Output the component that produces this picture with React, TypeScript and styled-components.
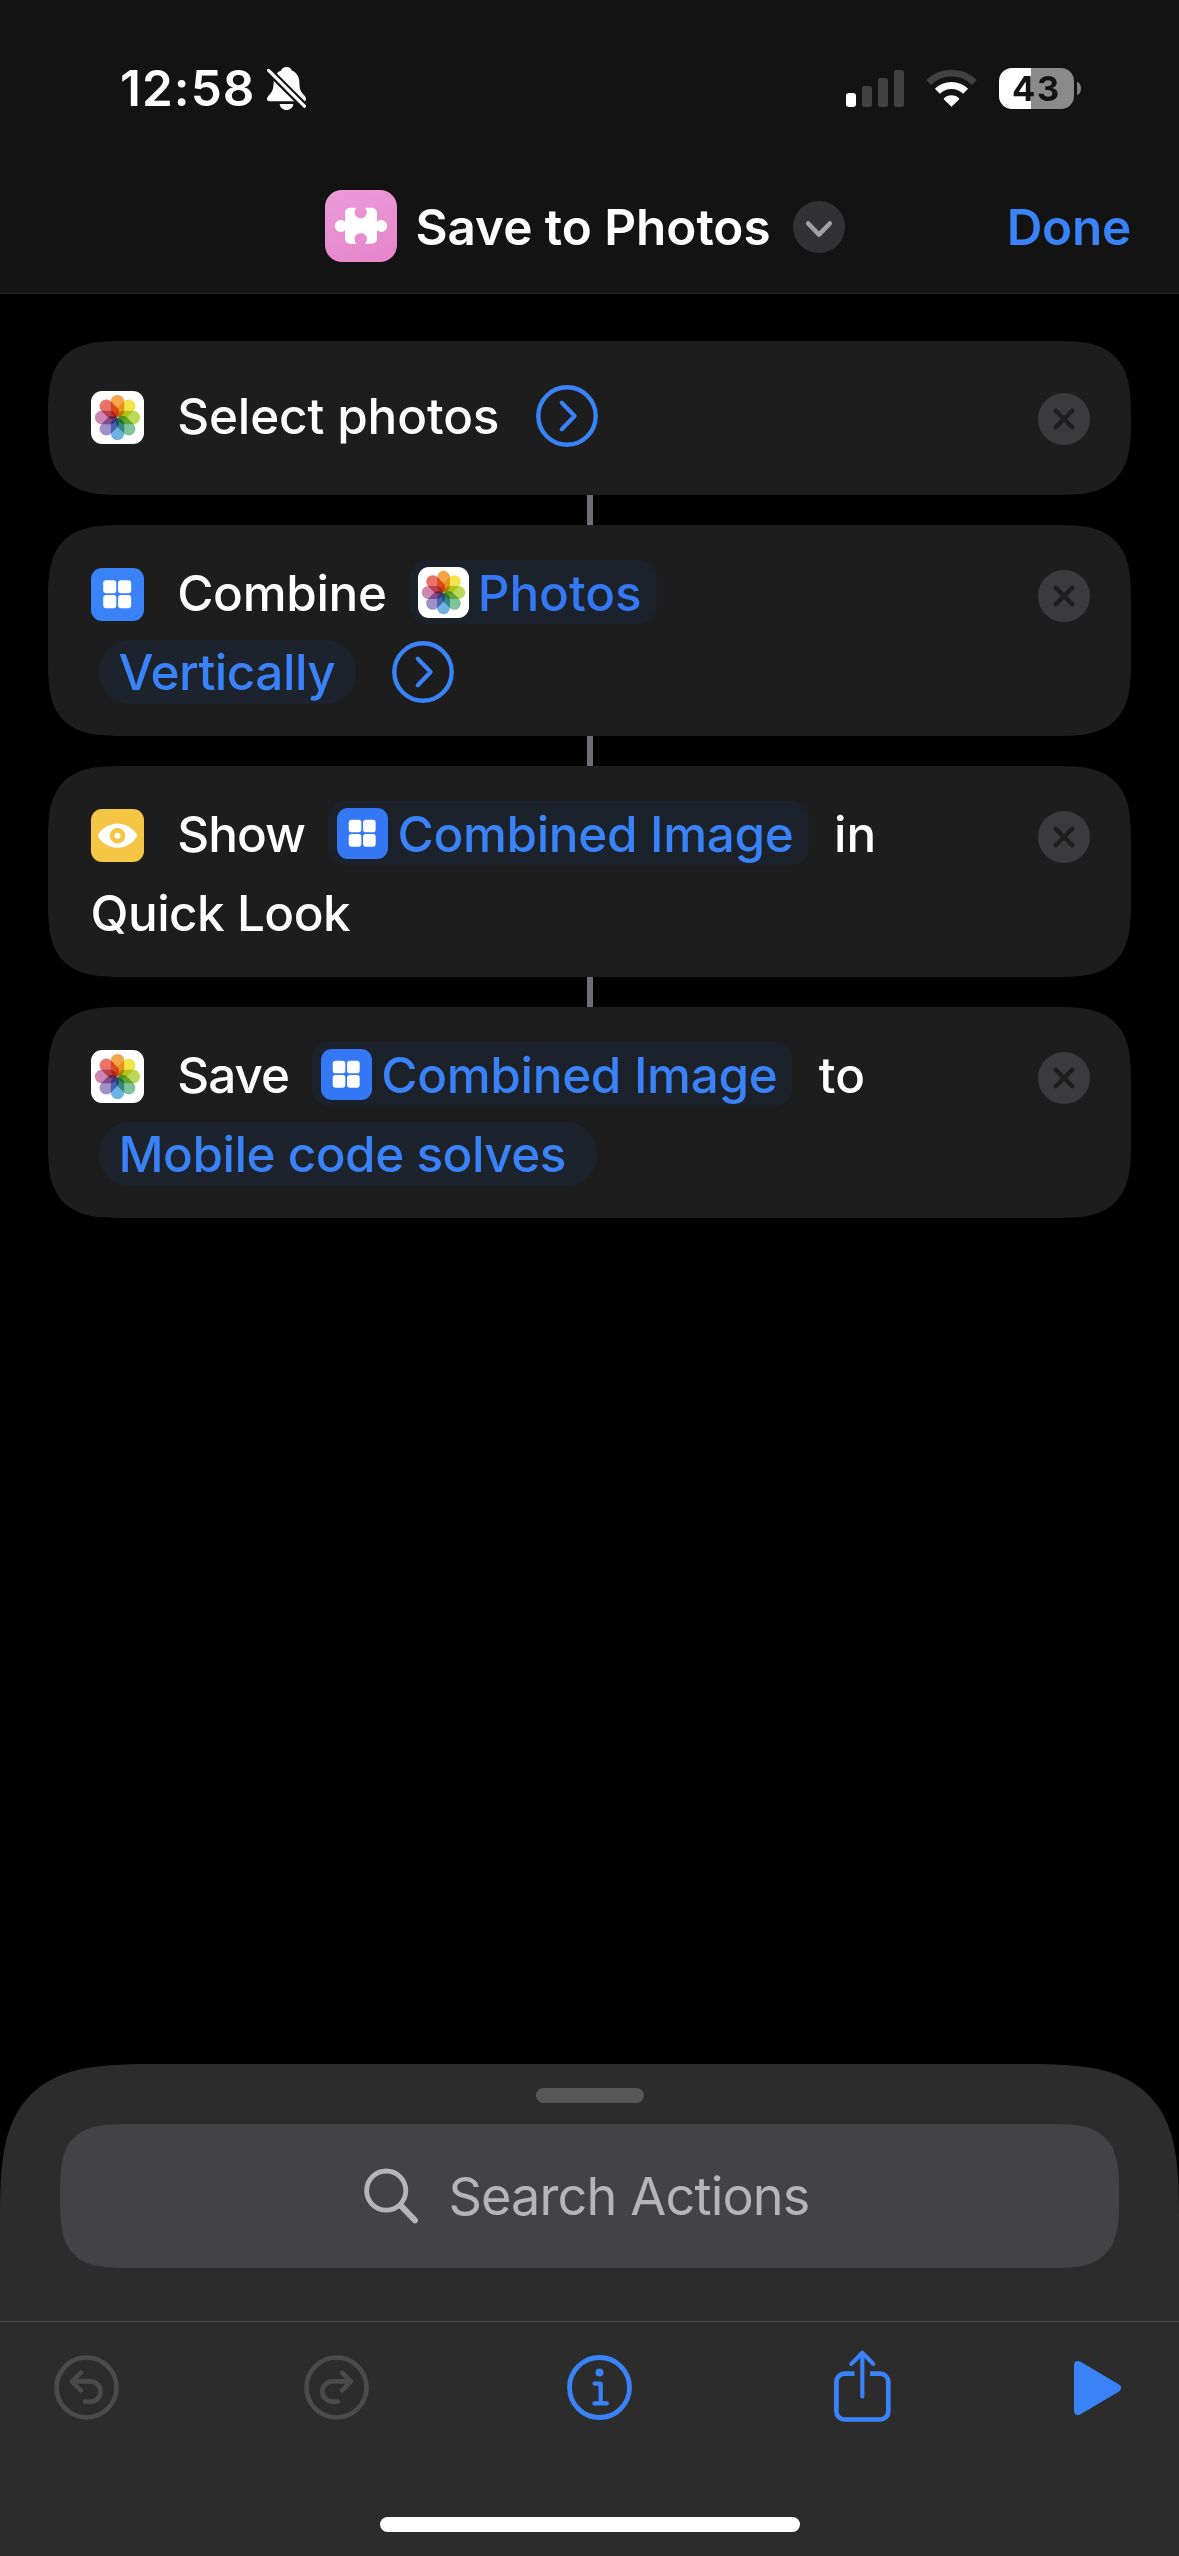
import React from "react";
import styled, { createGlobalStyle } from "styled-components";

const BLUE = "#3a82f7";
const DEEP_BLUE = "#3478f6";
const HEADER_BG = "#131313";
const CARD_BG = "#1d1d1d";

const GlobalStyle = createGlobalStyle`
  html, body { margin: 0; padding: 0; background: #000; }
  body { font-family: Inter, "Liberation Sans", sans-serif; }
  *, *::before, *::after { box-sizing: border-box; }
  svg { display: block; flex: none; }
  button { border: 0; margin: 0; padding: 0; background: none; font: inherit; color: inherit; }
`;

const Screen = styled.div`
  display: flex;
  flex-direction: column;
  width: 1179px;
  height: 2556px;
  overflow: hidden;
  background: #000;
  color: #fff;
`;

/* ---------- header ---------- */

const Header = styled.header`
  flex: none;
  height: 294px;
  background: ${HEADER_BG};
  border-bottom: 1px solid #272727;
`;

const StatusBar = styled.div`
  display: flex;
  align-items: center;
  justify-content: space-between;
  height: 176px;
  padding: 0 98px 0 120px;
`;

const StatusGroup = styled.div<{ $gap: number }>`
  display: flex;
  align-items: center;
  gap: ${(p) => p.$gap}px;
`;

const Time = styled.span`
  font-size: 49.4px;
  line-height: 60px;
  font-weight: 600;
  letter-spacing: 1.1px;
`;

const Battery = styled.div`
  display: flex;
  align-items: center;
  gap: 3px;
`;

const BatteryBody = styled.div`
  display: flex;
  align-items: center;
  justify-content: center;
  width: 75px;
  height: 41px;
  border-radius: 13px;
  background: linear-gradient(90deg, #fff 32px, #8a8a8a 32px);
  color: ${HEADER_BG};
  font-size: 34.5px;
  line-height: 41px;
  font-weight: 700;
  letter-spacing: 1.7px;
`;

const BatteryTip = styled.div`
  width: 4px;
  height: 13px;
  border-radius: 0 4px 4px 0 / 0 6.5px 6.5px 0;
  background: #808080;
`;

const NavBar = styled.div`
  display: flex;
  align-items: center;
  height: 101px;
  padding: 0 48px 0 325px;
`;

const ShortcutIcon = styled.div`
  flex: none;
  width: 72px;
  height: 72px;
  margin-top: -1px;
  border-radius: 17px;
  background: linear-gradient(160deg, #eb9cd7, #e584cb);
`;

const Title = styled.h1`
  margin: 0 0 0 18.4px;
  font-size: 49.4px;
  line-height: 60px;
  font-weight: 600;
  white-space: nowrap;
`;

const MenuButton = styled.button`
  width: 52px;
  height: 52px;
  margin-left: 22.4px;
  border-radius: 50%;
  background: #323234;
`;

const DoneButton = styled.button`
  margin-left: auto;
  color: ${BLUE};
  font-size: 49.4px;
  line-height: 60px;
  font-weight: 600;
  letter-spacing: -0.2px;
`;

/* ---------- actions ---------- */

const Workflow = styled.main`
  flex: 1;
  display: flex;
  flex-direction: column;
  align-items: center;
  padding: 47px 48px 0;
`;

const Card = styled.section<{ $single?: boolean }>`
  display: flex;
  justify-content: space-between;
  align-items: flex-start;
  width: 1083px;
  height: ${(p) => (p.$single ? 154 : 211)}px;
  padding: ${(p) => (p.$single ? 43 : 36)}px 41px 0 43px;
  border-radius: 77px;
  corner-shape: superellipse(1.6);
  background: ${CARD_BG};
`;

const Connector = styled.div`
  width: 6px;
  height: 30px;
  background: #6e6e76;
`;

const Lines = styled.div`
  display: flex;
  flex-direction: column;
  gap: 15px;
`;

const Line = styled.div`
  display: flex;
  align-items: center;
  height: 64px;
`;

const AppTile = styled.div<{ $size: number; $bg: string }>`
  flex: none;
  width: ${(p) => p.$size}px;
  height: ${(p) => p.$size}px;
  border-radius: 11px;
  background: ${(p) => p.$bg};
  overflow: hidden;
`;

const LeadIcon = styled.div`
  margin: 3px 33.2px 0 0;
`;

const Word = styled.span<{ $track?: number; $before?: number }>`
  margin-left: ${(p) => p.$before ?? 0}px;
  font-size: 49.4px;
  line-height: 60px;
  font-weight: 500;
  letter-spacing: ${(p) => p.$track ?? 0}px;
  white-space: nowrap;
`;

const VariableChip = styled.span<{ $before: number; $ink?: string; $gap: number }>`
  display: flex;
  align-items: center;
  gap: ${(p) => p.$gap}px;
  height: 64px;
  margin: -2px 0 0 ${(p) => p.$before}px;
  padding: 0 15px 0 8.5px;
  border-radius: 18px;
  background: #1c222c;
  color: ${(p) => p.$ink ?? BLUE};

  ${Word} {
    margin-top: 2px;
  }
`;

const ChoiceChip = styled.span<{ $right: number }>`
  display: flex;
  align-items: center;
  height: 64px;
  margin-left: 8px;
  padding: 0 ${(p) => p.$right}px 0 19.5px;
  border-radius: 31px;
  background: #1c232d;
  color: ${BLUE};
`;

const Disclosure = styled.button`
  margin-left: 36.5px;
  color: ${BLUE};
`;

const RemoveButton = styled.button`
  width: 52px;
  height: 52px;
  margin-top: 9px;
  border-radius: 50%;
  background: #3b3b3e;
`;

/* ---------- bottom sheet ---------- */

const Sheet = styled.footer`
  flex: none;
  display: flex;
  flex-direction: column;
  align-items: center;
  height: 492px;
  padding-top: 24px;
  border-radius: 160px 160px 0 0;
  corner-shape: superellipse(1.7);
  background: #2c2c2c;
`;

const Grabber = styled.div`
  width: 108px;
  height: 15px;
  border-radius: 8px;
  background: #575757;
`;

const SearchField = styled.div`
  display: flex;
  align-items: center;
  gap: 30.4px;
  width: 1059px;
  height: 144px;
  margin: 21px 0 53px;
  padding-left: 304px;
  border-radius: 72px;
  corner-shape: superellipse(1.7);
  background: #434345;
  color: #b5b5b7;
  font-size: 52.2px;
  line-height: 62px;
  font-weight: 400;
  letter-spacing: -0.85px;
`;

const Toolbar = styled.nav`
  display: flex;
  align-items: center;
  width: 100%;
  height: 132px;
  padding-left: 54px;
  border-top: 1px solid #4c4c4c;
`;

const Tool = styled.button<{ $before?: number; $off?: boolean }>`
  margin-left: ${(p) => p.$before ?? 0}px;
  color: ${(p) => (p.$off ? "#4b4b4b" : BLUE)};
`;

const HomeIndicator = styled.div`
  width: 420px;
  height: 15px;
  margin-top: 64px;
  border-radius: 8px;
  background: #fff;
`;

/* ---------- drawings ---------- */

const BellSlash = () => (
  <svg width="39" height="43" viewBox="0 0 39 43">
    <path
      fill="#fff"
      d="M19.5 0C22.5 0 24 1.5 24.8 3.5C29.5 5.5 32 9.5 32.3 14.5C32.6 21 33 23.5 36 27C38 29.3 39 30.5 39 32C39 33.5 38 34.3 36.3 34.3H2.7C1 34.3 0 33.3 0 32C0 30.5 1 29.3 3 27C6 23.5 6.4 21 6.7 14.5C7 9.5 9.5 5.5 14.2 3.5C15 1.5 16.5 0 19.5 0Z"
    />
    <path d="M-1 1L40 41.8" stroke={HEADER_BG} strokeWidth="7.6" />
    <path fill="#fff" d="M12.7 37H26.3C26 40.5 23 43 19.5 43S13 40.5 12.7 37Z" />
    <path d="M1.6 3.4L37.4 39.2" stroke="#fff" strokeWidth="3.2" strokeLinecap="round" />
  </svg>
);

const Signal = () => (
  <svg width="58" height="37" viewBox="0 0 58 37">
    <rect x="0" y="23" width="10" height="14" rx="3" fill="#fff" />
    <rect x="16" y="16" width="10" height="21" rx="3" fill="#414141" />
    <rect x="32" y="8" width="10" height="29" rx="3" fill="#414141" />
    <rect x="48" y="0" width="10" height="37" rx="3" fill="#414141" />
  </svg>
);

const Wifi = () => (
  <svg width="51" height="38" viewBox="0 0 51 38" fill="none">
    <path d="M2.7 13.5A32.3 32.3 0 0 1 48.3 13.5" stroke="#414141" strokeWidth="6.8" />
    <path d="M11.4 22.2A20 20 0 0 1 39.6 22.2" stroke="#fff" strokeWidth="7" />
    <path
      d="M25.5 36.8L18.6 29.9C22 26.2 29 26.2 32.4 29.9Z"
      fill="#fff"
      stroke="#fff"
      strokeWidth="1.6"
      strokeLinejoin="round"
    />
  </svg>
);

const Puzzle = () => (
  <svg width="72" height="72" viewBox="0 0 72 72">
    <path
      fill="#fff"
      d="M25 17.7H31.5A6.2 6.2 0 1 0 39.9 17.7H47A5 5 0 0 1 52 22.7V31.7A6 6 0 1 1 52 40.3V48.7A5 5 0 0 1 47 53.7H39.9A6.2 6.2 0 1 0 31.5 53.7H25A5 5 0 0 1 20 48.7V40.3A6 6 0 1 1 20 31.7V22.7A5 5 0 0 1 25 17.7Z"
    />
  </svg>
);

const ChevronDown = () => (
  <svg width="52" height="52" viewBox="0 0 52 52" fill="none">
    <path
      d="M15.2 22.5L26 33.6L36.8 22.5"
      stroke="#a0a0a6"
      strokeWidth="4.6"
      strokeLinecap="round"
      strokeLinejoin="round"
    />
  </svg>
);

const ChevronCircle = () => (
  <svg width="62" height="62" viewBox="0 0 62 62" fill="none" stroke="currentColor">
    <circle cx="31" cy="31" r="28.7" strokeWidth="4.4" />
    <path d="M25.8 17.8L38.6 31L25.8 44.2" strokeWidth="4.2" strokeLinecap="round" strokeLinejoin="round" />
  </svg>
);

const Cross = () => (
  <svg width="52" height="52" viewBox="0 0 52 52">
    <path d="M17.8 17.8L34.2 34.2M34.2 17.8L17.8 34.2" stroke={CARD_BG} strokeWidth="4.4" strokeLinecap="round" />
  </svg>
);

const petals = ["#f2a54a", "#f3e44c", "#bcd957", "#7fc39a", "#6fb1e2", "#a08fc9", "#cb86b4", "#e9736b"];

const Petal = styled.rect`
  mix-blend-mode: multiply;
`;

const Flower = ({ size }: { size: number }) => (
  <svg width={size} height={size} viewBox="0 0 53 53">
    {petals.map((fill, i) => (
      <Petal
        key={fill}
        x="-6.7"
        y="-22.6"
        width="13.4"
        height="22.2"
        rx="6.7"
        fill={fill}
        transform={`translate(26.5 26.5) rotate(${i * 45})`}
      />
    ))}
  </svg>
);

const GridGlyph = ({ size }: { size: number }) => (
  <svg width={size} height={size} viewBox="0 0 53 53" fill="#fff">
    <rect x="12.2" y="12.2" width="13.1" height="13.1" rx="3" />
    <rect x="27.1" y="12.2" width="13.1" height="13.1" rx="3" />
    <rect x="12.2" y="27.1" width="13.1" height="13.1" rx="3" />
    <rect x="27.1" y="27.1" width="13.1" height="13.1" rx="3" />
  </svg>
);

const EyeGlyph = () => (
  <svg width="53" height="53" viewBox="0 0 53 53">
    <path
      fill="#fff"
      d="M26.5 14.6C37.5 14.6 46 23.8 46 26.7S37.5 38.8 26.5 38.8S7 29.6 7 26.7S15.5 14.6 26.5 14.6Z"
    />
    <circle cx="26.5" cy="26.7" r="5.4" fill="none" stroke="#f5c545" strokeWidth="4.8" />
  </svg>
);

const Magnifier = () => (
  <svg width="54" height="56" viewBox="0 0 54 56" fill="none" stroke="currentColor">
    <circle cx="22.2" cy="22.6" r="19.6" strokeWidth="4.8" />
    <path d="M36.6 37.4L51 52.4" strokeWidth="6" strokeLinecap="round" />
  </svg>
);

const CurvedArrow = ({ flip }: { flip?: boolean }) => (
  <svg
    width="65"
    height="65"
    viewBox="0 0 65 65"
    fill="none"
    stroke="currentColor"
    strokeWidth="4.6"
    strokeLinecap="round"
    strokeLinejoin="round"
  >
    <circle cx="32.5" cy="32.5" r="30" />
    <g transform={flip ? "translate(65 0) scale(-1 1)" : undefined}>
      <path d="M27 17.5L18 26.4L27 35.3" />
      <path d="M18.5 26.4H36.5A10 10 0 0 1 36.5 46.6H31" />
    </g>
  </svg>
);

const Info = () => (
  <svg width="65" height="65" viewBox="0 0 65 65" fill="none" stroke="currentColor">
    <circle cx="32.5" cy="32.5" r="30" strokeWidth="4.8" />
    <circle cx="32.5" cy="17.4" r="4" fill="currentColor" stroke="none" />
    <path d="M27.6 28.6H33.7V48.4M27.4 48.4H39.8" strokeWidth="4.3" strokeLinecap="round" strokeLinejoin="round" />
  </svg>
);

const Share = () => (
  <svg width="57" height="75" viewBox="0 2.5 57 75" fill="none" stroke="currentColor" strokeWidth="4.7">
    <path d="M20.5 26.2H10.5A8.1 8.1 0 0 0 2.4 34.3V63.9A8.1 8.1 0 0 0 10.5 72H46.2A8.1 8.1 0 0 0 54.3 63.9V34.3A8.1 8.1 0 0 0 46.2 26.2H36" />
    <path d="M28.3 5.4V49M17.4 16.4L28.3 5.2L39.2 16.4" strokeWidth="4.2" strokeLinecap="round" strokeLinejoin="round" />
  </svg>
);

const Play = () => (
  <svg width="47" height="54" viewBox="0 0 47 54">
    <path
      d="M4 4L43 27L4 50Z"
      fill="currentColor"
      stroke="currentColor"
      strokeWidth="8"
      strokeLinejoin="round"
    />
  </svg>
);

const tiles = {
  photos: (size: number) => (
    <AppTile $size={size} $bg="#fff">
      <Flower size={size} />
    </AppTile>
  ),
  grid: (size: number) => (
    <AppTile $size={size} $bg={size > 52 ? BLUE : DEEP_BLUE}>
      <GridGlyph size={size} />
    </AppTile>
  ),
  eye: (size: number) => (
    <AppTile $size={size} $bg="#f5c545">
      <EyeGlyph />
    </AppTile>
  ),
};

const Remove = () => (
  <RemoveButton aria-label="Remove">
    <Cross />
  </RemoveButton>
);

export default function App() {
  return (
    <Screen>
      <GlobalStyle />
      <Header>
        <StatusBar>
          <StatusGroup $gap={11}>
            <Time>12:58</Time>
            <BellSlash />
          </StatusGroup>
          <StatusGroup $gap={22}>
            <Signal />
            <Wifi />
            <Battery>
              <BatteryBody>43</BatteryBody>
              <BatteryTip />
            </Battery>
          </StatusGroup>
        </StatusBar>
        <NavBar>
          <ShortcutIcon>
            <Puzzle />
          </ShortcutIcon>
          <Title>Save to Photos</Title>
          <MenuButton aria-label="Shortcut menu">
            <ChevronDown />
          </MenuButton>
          <DoneButton>Done</DoneButton>
        </NavBar>
      </Header>

      <Workflow>
        <Card $single>
          <Line>
            <LeadIcon>{tiles.photos(53)}</LeadIcon>
            <Word $track={-0.12}>Select photos</Word>
            <Disclosure aria-label="Show more">
              <ChevronCircle />
            </Disclosure>
          </Line>
          <Remove />
        </Card>
        <Connector />
        <Card>
          <Lines>
            <Line>
              <LeadIcon>{tiles.grid(53)}</LeadIcon>
              <Word $track={-0.3}>Combine</Word>
              <VariableChip $before={23} $gap={8.5} $ink={DEEP_BLUE}>
                {tiles.photos(51)}
                <Word>Photos</Word>
              </VariableChip>
            </Line>
            <Line>
              <ChoiceChip $right={20.5}>
                <Word $track={-0.45}>Vertically</Word>
              </ChoiceChip>
              <Disclosure aria-label="Show more">
                <ChevronCircle />
              </Disclosure>
            </Line>
          </Lines>
          <Remove />
        </Card>
        <Connector />
        <Card>
          <Lines>
            <Line>
              <LeadIcon>{tiles.eye(53)}</LeadIcon>
              <Word $track={-0.9}>Show</Word>
              <VariableChip $before={23.3} $gap={9.5}>
                {tiles.grid(51)}
                <Word $track={-0.3}>Combined Image</Word>
              </VariableChip>
              <Word $before={25.5}>in</Word>
            </Line>
            <Line>
              <Word $before={-0.5} $track={-0.5}>
                Quick Look
              </Word>
            </Line>
          </Lines>
          <Remove />
        </Card>
        <Connector />
        <Card>
          <Lines>
            <Line>
              <LeadIcon>{tiles.photos(53)}</LeadIcon>
              <Word $track={-0.9}>Save</Word>
              <VariableChip $before={22.8} $gap={9.8}>
                {tiles.grid(51)}
                <Word $track={-0.3}>Combined Image</Word>
              </VariableChip>
              <Word $before={26.4}>to</Word>
            </Line>
            <Line>
              <ChoiceChip $right={31.5}>
                <Word $track={-0.47}>Mobile code solves</Word>
              </ChoiceChip>
            </Line>
          </Lines>
          <Remove />
        </Card>
      </Workflow>

      <Sheet>
        <Grabber />
        <SearchField>
          <Magnifier />
          <span>Search Actions</span>
        </SearchField>
        <Toolbar>
          <Tool $off aria-label="Undo">
            <CurvedArrow />
          </Tool>
          <Tool $off $before={185} aria-label="Redo">
            <CurvedArrow flip />
          </Tool>
          <Tool $before={198} aria-label="Info">
            <Info />
          </Tool>
          <Tool $before={202} aria-label="Share">
            <Share />
          </Tool>
          <Tool $before={183} aria-label="Run">
            <Play />
          </Tool>
        </Toolbar>
        <HomeIndicator />
      </Sheet>
    </Screen>
  );
}
